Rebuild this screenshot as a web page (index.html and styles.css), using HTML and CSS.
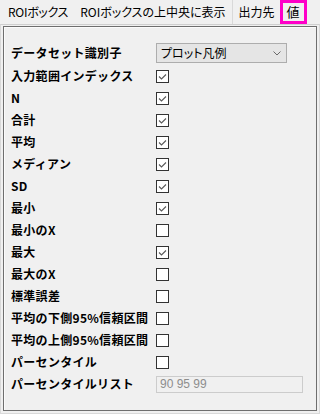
FILE: index.html
```html
<!DOCTYPE html>
<html lang="ja">
<head>
<meta charset="utf-8">
<link rel="stylesheet" href="styles.css">
</head>
<body>
<div class="tabs">
  <div class="tab first">ROIボックス</div>
  <div class="tab sep">ROIボックスの上中央に表示</div>
  <div class="tab">出力先</div>
  <div class="tab active">値</div>
</div>
<div class="pane">
  <div class="box">
    <div class="form">
      <div class="label">データセット識別子</div>
      <div class="ctrl">
        <div class="select"><span>プロット凡例</span>
          <svg class="chev" width="8" height="5" viewBox="0 0 8 5"><polyline points="0.5,0.5 4,4 7.5,0.5" fill="none" stroke="#6a6a6a" stroke-width="1"/></svg>
        </div>
      </div>

      <div class="label">入力範囲インデックス</div>
      <div class="ctrl"><span class="cb on"><svg width="11" height="11" viewBox="0 0 11 11"><polyline points="2,5.5 4.5,8 9,3.5" fill="none" stroke="#5a5a5a" stroke-width="1.1"/></svg></span></div>

      <div class="label">N</div>
      <div class="ctrl"><span class="cb on"><svg width="11" height="11" viewBox="0 0 11 11"><polyline points="2,5.5 4.5,8 9,3.5" fill="none" stroke="#5a5a5a" stroke-width="1.1"/></svg></span></div>

      <div class="label">合計</div>
      <div class="ctrl"><span class="cb on"><svg width="11" height="11" viewBox="0 0 11 11"><polyline points="2,5.5 4.5,8 9,3.5" fill="none" stroke="#5a5a5a" stroke-width="1.1"/></svg></span></div>

      <div class="label">平均</div>
      <div class="ctrl"><span class="cb on"><svg width="11" height="11" viewBox="0 0 11 11"><polyline points="2,5.5 4.5,8 9,3.5" fill="none" stroke="#5a5a5a" stroke-width="1.1"/></svg></span></div>

      <div class="label">メディアン</div>
      <div class="ctrl"><span class="cb on"><svg width="11" height="11" viewBox="0 0 11 11"><polyline points="2,5.5 4.5,8 9,3.5" fill="none" stroke="#5a5a5a" stroke-width="1.1"/></svg></span></div>

      <div class="label">SD</div>
      <div class="ctrl"><span class="cb on"><svg width="11" height="11" viewBox="0 0 11 11"><polyline points="2,5.5 4.5,8 9,3.5" fill="none" stroke="#5a5a5a" stroke-width="1.1"/></svg></span></div>

      <div class="label">最小</div>
      <div class="ctrl"><span class="cb on"><svg width="11" height="11" viewBox="0 0 11 11"><polyline points="2,5.5 4.5,8 9,3.5" fill="none" stroke="#5a5a5a" stroke-width="1.1"/></svg></span></div>

      <div class="label">最小のX</div>
      <div class="ctrl"><span class="cb"></span></div>

      <div class="label">最大</div>
      <div class="ctrl"><span class="cb on"><svg width="11" height="11" viewBox="0 0 11 11"><polyline points="2,5.5 4.5,8 9,3.5" fill="none" stroke="#5a5a5a" stroke-width="1.1"/></svg></span></div>

      <div class="label">最大のX</div>
      <div class="ctrl"><span class="cb"></span></div>

      <div class="label">標準誤差</div>
      <div class="ctrl"><span class="cb"></span></div>

      <div class="label">平均の下側95%信頼区間</div>
      <div class="ctrl"><span class="cb"></span></div>

      <div class="label">平均の上側95%信頼区間</div>
      <div class="ctrl"><span class="cb"></span></div>

      <div class="label">パーセンタイル</div>
      <div class="ctrl"><span class="cb"></span></div>

      <div class="label">パーセンタイルリスト</div>
      <div class="ctrl"><div class="input">90 95 99</div></div>
    </div>
  </div>
</div>
</body>
</html>
```
FILE: styles.css
```css
* { box-sizing: border-box; }
html, body {
  margin: 0;
  padding: 0;
  background: #f0f0f0;
}
body {
  width: 320px;
  height: 414px;
  overflow: hidden;
  font-family: "Noto Sans CJK JP", "Noto Sans", sans-serif;
  font-size: 12px;
  color: #000;
  display: flex;
  flex-direction: column;
}
.tabs {
  display: flex;
  height: 24px;
  padding-left: 1px;
  align-items: stretch;
}
.tab {
  padding: 0 6px 1px 6px;
  display: flex;
  align-items: center;
  font-feature-settings: "palt";
  line-height: 1;
  white-space: nowrap;
}
.tab.first {
  padding-left: 7px;
  letter-spacing: -0.3px;
}
.tab.sep {
  border-right: 1px solid #d9d9d9;
}
.tab.active {
  border: 3px solid #ff00c8;
  padding: 0 4px 1px 4px;
  font-size: 13px;
  margin-left: -1px;
}
.pane {
  flex: 1;
  border: 1px solid #d9d9d9;
  border-top-color: #cfcfcf;
  padding: 1px 2px 2px 2px;
  display: flex;
}
.box {
  flex: 1;
  border: 1px solid #6e6e6e;
  box-shadow: inset 1px 1px 0 #fbfbfb;
  padding: 14px 7px 0 7px;
}
.form {
  display: grid;
  grid-template-columns: 145px 1fr;
  grid-template-rows: 24px;
  grid-auto-rows: 22px;
  align-items: center;
}
.label {
  font-weight: bold;
  font-size: 12px;
  line-height: 1;
  white-space: nowrap;
  letter-spacing: 0.3px;
}
.ctrl {
  display: flex;
  align-items: center;
}
.select {
  width: 131px;
  height: 20px;
  background: #e5e5e5;
  border: 1px solid #adadad;
  display: flex;
  align-items: center;
  justify-content: space-between;
  padding: 0 5px 0 4px;
  font-size: 12px;
  font-feature-settings: "palt";
  line-height: 1;
}
.chev { display: block; }
.cb {
  width: 13px;
  height: 13px;
  border: 1px solid #333;
  background: #fff;
  display: flex;
  align-items: center;
  justify-content: center;
}
.cb svg { display: block; }
.input {
  width: 147px;
  height: 17px;
  border: 1px solid #cccccc;
  background: #f0f0f0;
  color: #8d8d8d;
  font-family: "Liberation Sans", Arial, sans-serif;
  font-size: 12px;
  line-height: 1;
  display: flex;
  align-items: center;
  padding-left: 3px;
}
```
